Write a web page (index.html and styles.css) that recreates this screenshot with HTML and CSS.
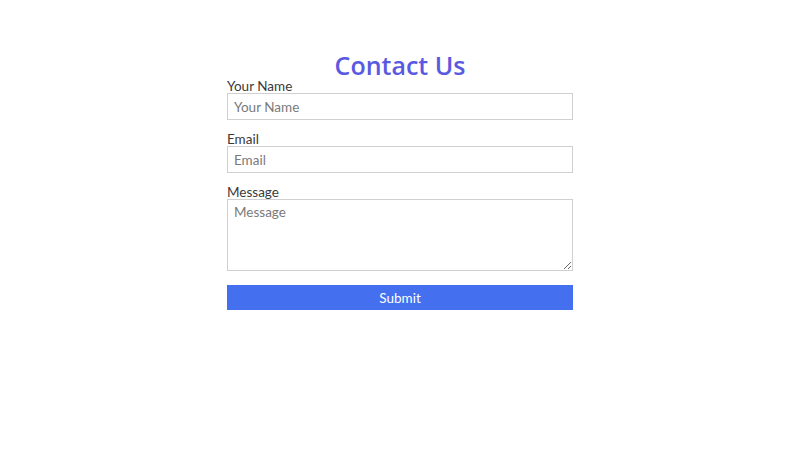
FILE: index.html
```html
<!DOCTYPE html>
<html lang="en">
<head>
<meta charset="utf-8">
<title>Contact Us</title>
<link rel="stylesheet" href="styles.css">
</head>
<body>
<main class="page">
  <h1 class="title">Contact Us</h1>
  <form class="form">
    <div class="field">
      <label class="label" for="name">Your Name</label>
      <input class="input" id="name" type="text" placeholder="Your Name">
    </div>
    <div class="field">
      <label class="label" for="email">Email</label>
      <input class="input" id="email" type="email" placeholder="Email">
    </div>
    <div class="field">
      <label class="label" for="message">Message</label>
      <textarea class="input textarea" id="message" placeholder="Message"></textarea>
    </div>
    <button class="submit" type="button">Submit</button>
  </form>
</main>
</body>
</html>
```
FILE: styles.css
```css
* { box-sizing: border-box; }
body {
  margin: 0;
  background: #ffffff;
  font-family: "Lato", "Open Sans", sans-serif;
  color: #3a3a3a;
}
.page {
  width: 346px;
  margin: 0 auto;
  padding-top: 50px;
}
.title {
  margin: 0;
  text-align: center;
  font-family: "Open Sans", "Lato", sans-serif;
  font-size: 25px;
  line-height: 30px;
  font-weight: 600;
  color: #5a5ae0;
}
.form {
  display: flex;
  flex-direction: column;
  gap: 13px;
}
.field {
  display: flex;
  flex-direction: column;
}
.label {
  font-size: 13.5px;
  line-height: 13px;
  color: #3a3a3a;
}
.input {
  width: 100%;
  height: 27px;
  border: 1px solid #d0d0d0;
  padding: 0 6px;
  font-family: inherit;
  font-size: 13.5px;
  color: #333;
  outline: none;
}
.input::placeholder { color: #7a7a7a; }
.textarea {
  height: 72px;
  padding: 4px 6px;
  resize: vertical;
}
.submit {
  margin-top: 1px;
  height: 25px;
  border: none;
  background: #4470f0;
  color: #ffffff;
  font-family: inherit;
  font-size: 13.5px;
}
```
